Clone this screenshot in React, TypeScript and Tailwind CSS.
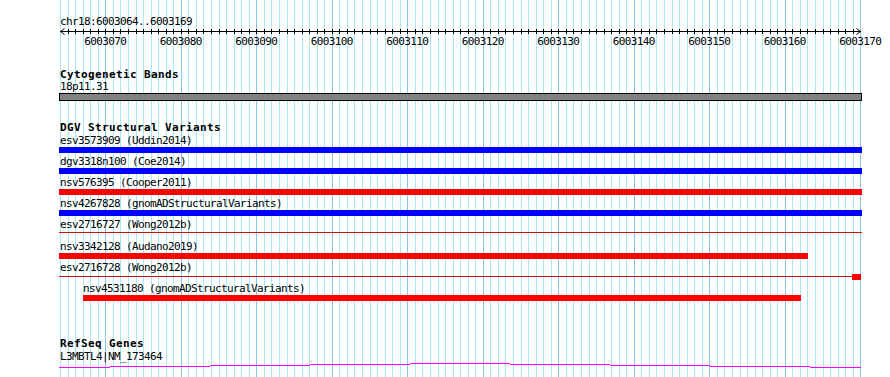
import React from 'react';

// bases 6003064..6003169, 7.55px per base, first base starts at x=60
const PX = 7.55;
const guides = Array.from({ length: 107 }, (_, k) => k);
const tickLabels = Array.from({ length: 11 }, (_, j) => 6 + j * 10);

const geneSegments: [number, number, number][] = [
  [59, 110, 366],
  [110, 210, 365],
  [210, 310, 364],
  [310, 410, 363],
  [410, 510, 362],
  [510, 610, 363],
  [610, 710, 364],
  [710, 810, 365],
  [810, 861, 366],
];

function Guidelines() {
  return (
    <svg className="absolute inset-0" width={890} height={377} shapeRendering="crispEdges">
      {guides.map((k) => (
        <rect
          key={k}
          x={Math.round(60 + k * PX)}
          y={0}
          width={1}
          height={377}
          fill={(k + 4) % 10 === 0 ? '#86c6ec' : '#a8eaef'}
        />
      ))}
    </svg>
  );
}

function Ruler() {
  return (
    <svg className="block overflow-visible" width={830} height={21}>
      <g shapeRendering="crispEdges">
        <rect x={0} y={4} width={801} height={1} fill="#000" />
        {guides.slice(1, 106).map((k) => (
          <rect key={k} x={Math.round(k * PX)} y={2} width={1} height={5} fill="#000" />
        ))}
      </g>
      <polyline points="4.5,1.5 0.5,4.5 4.5,7.5" fill="none" stroke="#000" strokeWidth={1} />
      <polyline points="796.5,1.5 800.5,4.5 796.5,7.5" fill="none" stroke="#000" strokeWidth={1} />
      {tickLabels.map((k) => (
        <text
          key={k}
          x={k * PX}
          y={18}
          textAnchor="middle"
          fontFamily="'DejaVu Sans Mono', monospace"
          fontSize={11}
          letterSpacing={-0.62}
          fill="#000"
        >
          {6003064 + k}
        </text>
      ))}
    </svg>
  );
}

function Title({ children }: { children: React.ReactNode }) {
  return <div className="font-bold tracking-[0.38px]">{children}</div>;
}

function Row({ label, indent, children }: { label: string; indent?: boolean; children: React.ReactNode }) {
  return (
    <div className="pb-[3px]">
      <div className={indent ? 'pl-[23px]' : ''}>{label}</div>
      <div className="mt-px h-[6px]">{children}</div>
    </div>
  );
}

export default function App() {
  return (
    <div className="relative w-[890px] h-[377px] overflow-hidden bg-white text-black font-['DejaVu_Sans_Mono',monospace] text-[11px] leading-[11px] tracking-[-0.62px]">
      <Guidelines />
      <div className="relative pl-[60px]">
        <div className="pt-[16px]">chr18:6003064..6003169</div>
        <Ruler />

        <div className="mt-[21px]">
          <Title>Cytogenetic Bands</Title>
        </div>
        <div className="mt-px">18p11.31</div>
        <div className="mt-px -ml-px w-[803px] h-[8px] border border-black bg-[#828282]" />

        <div className="mt-[21px]">
          <Title>DGV Structural Variants</Title>
        </div>
        <div className="mt-[2px]">
          <Row label="esv3573909 (Uddin2014)">
            <div className="-ml-px h-full w-[803px] bg-[#0000ff]" />
          </Row>
          <Row label="dgv3318n100 (Coe2014)">
            <div className="-ml-px h-full w-[803px] bg-[#0000ff]" />
          </Row>
          <Row label="nsv576395 (Cooper2011)">
            <div className="-ml-px h-full w-[803px] bg-[#ff0000]" />
          </Row>
          <Row label="nsv4267828 (gnomADStructuralVariants)">
            <div className="-ml-px h-full w-[803px] bg-[#0000ff]" />
          </Row>
          <Row label="esv2716727 (Wong2012b)">
            <div className="-ml-px mt-[2px] h-px w-[803px] bg-[#cc1111]" />
          </Row>
          <Row label="nsv3342128 (Audano2019)">
            <div className="-ml-px h-full w-[749px] bg-[#ff0000]" />
          </Row>
          <Row label="esv2716728 (Wong2012b)">
            <div className="-ml-px flex items-start">
              <div className="mt-[2px] h-px w-[793px] bg-[#cc1111]" />
              <div className="h-[6px] w-[9px] bg-[#ff0000]" />
            </div>
          </Row>
          <Row label="nsv4531180 (gnomADStructuralVariants)" indent>
            <div className="ml-[23px] h-full w-[718px] bg-[#ff0000]" />
          </Row>
        </div>

        <div className="mt-[34px]">
          <Title>RefSeq Genes</Title>
        </div>
        <div className="mt-[2px]">L3MBTL4|NM_173464</div>
        <svg className="block overflow-visible -ml-[60px]" width={890} height={16} shapeRendering="crispEdges">
          {geneSegments.map(([x1, x2, y]) => (
            <rect key={x1} x={x1} y={y - 361} width={x2 - x1} height={1} fill="#ff00ff" />
          ))}
        </svg>
      </div>
    </div>
  );
}
